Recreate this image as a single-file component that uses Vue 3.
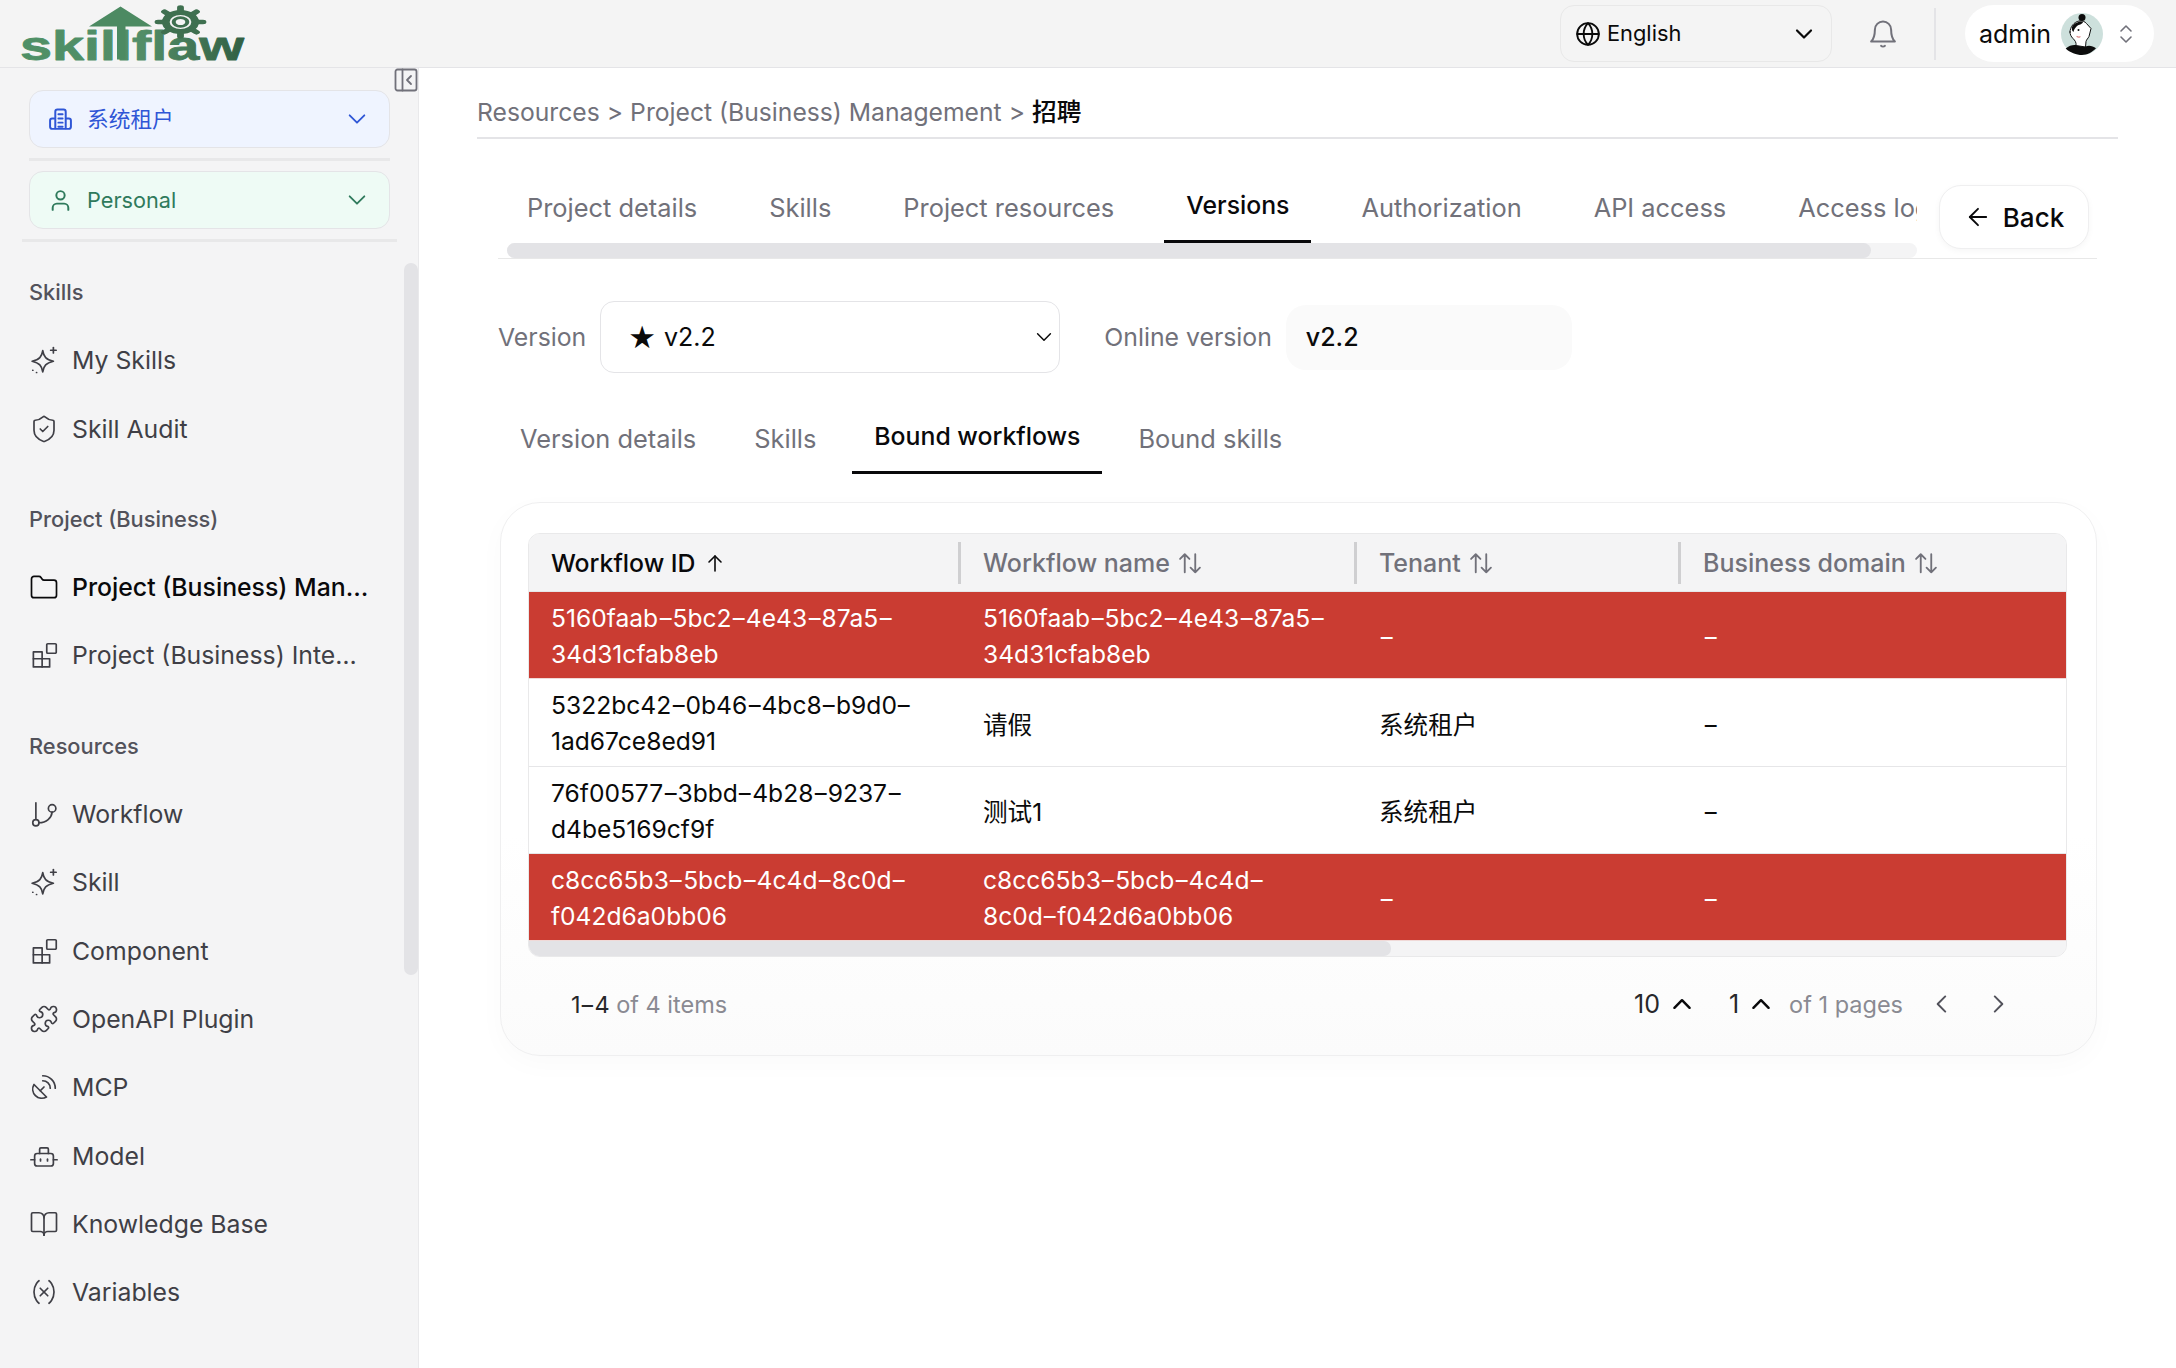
<script setup>
const ICONS = {
  sparkle: ['M11 4.5C11.8 9.6 13.6 11.6 19.5 13 13.6 14.4 11.8 16.4 11 21.5 10.2 16.4 8.4 14.4 2.5 13 8.4 11.6 10.2 9.6 11 4.5Z', 'M19.5 2v4.4', 'M17.3 4.2h4.4', 'M3 20.2h.1', 'M6 22h.1'],
  shield: ['M20 13c0 5-3.5 7.5-7.66 8.95a1 1 0 0 1-.67-.01C7.5 20.5 4 18 4 13V6a1 1 0 0 1 1-1c2 0 4.5-1.2 6.24-2.72a1.17 1.17 0 0 1 1.52 0C14.51 3.81 17 5 19 5a1 1 0 0 1 1 1z', 'm9 12 2 2 4-4'],
  folder: ['M20 20.5a2 2 0 0 0 2-2V8.5a2 2 0 0 0-2-2h-7.9a2 2 0 0 1-1.69-.9L9.6 4.4A2 2 0 0 0 7.93 3.5H4a2 2 0 0 0-2 2v13a2 2 0 0 0 2 2Z'],
  blocks: ['M3.5 9.5h7v5.5h6v6.5h-13z', 'M10.5 15v6.5', 'M3.5 15h7', 'M15 3h6a.8.8 0 0 1 .8.8v6a.8.8 0 0 1-.8.8h-6a.8.8 0 0 1-.8-.8v-6a.8.8 0 0 1 .8-.8z'],
  flow: ['M5.5 3v12.5', 'M8 19c6 0 10-4 10.500-8.500', 'M5.500 21.500a2.500 2.500 0 1 0 0-5 2.500 2.500 0 0 0 0 5z', 'M18.500 10.500a3 3 0 1 0 0-6 3 3 0 0 0 0 6z'],
  puzzle: ['M15.39 4.39a1 1 0 0 0 1.68-.474 2.5 2.5 0 1 1 3.014 3.015 1 1 0 0 0-.474 1.68l1.683 1.682a2.414 2.414 0 0 1 0 3.414L19.61 15.39a1 1 0 0 1-1.68-.474 2.5 2.5 0 1 0-3.014 3.015 1 1 0 0 1 .474 1.68l-1.683 1.682a2.414 2.414 0 0 1-3.414 0L8.61 19.61a1 1 0 0 0-1.68.474 2.5 2.5 0 1 1-3.014-3.015 1 1 0 0 0 .474-1.68l-1.683-1.682a2.414 2.414 0 0 1 0-3.414L4.39 8.61a1 1 0 0 1 1.68.474 2.5 2.5 0 1 0 3.014-3.015 1 1 0 0 1-.474-1.68l1.683-1.682a2.414 2.414 0 0 1 3.414 0z'],
  dish: ['M4 10a7.31 7.31 0 0 0 10 10Z', 'm9 15 3-3', 'M17 13a6 6 0 0 0-6-6', 'M21 13A10 10 0 0 0 11 3'],
  bot: ['M6.500 10h11a2 2 0 0 1 2 2v6a2 2 0 0 1-2 2h-11a2 2 0 0 1-2-2v-6a2 2 0 0 1 2-2z', 'M8.500 10V6.500a1 1 0 0 1 1-1h5a1 1 0 0 1 1 1V10', 'M1.500 15h3', 'M19.500 15h3', 'M9.200 14.500v1.500', 'M14.800 14.500v1.500'],
  book: ['M12 7v14', 'M3 18a1 1 0 0 1-1-1V4a1 1 0 0 1 1-1h5a4 4 0 0 1 4 4 4 4 0 0 1 4-4h5a1 1 0 0 1 1 1v13a1 1 0 0 1-1 1h-6a3 3 0 0 0-3 3 3 3 0 0 0-3-3z'],
  variable: ['M8 21s-4-3-4-9 4-9 4-9', 'M16 3s4 3 4 9-4 9-4 9', 'm9 9 6 6', 'm15 9-6 6'],
}

const groups = [
  { label: 'Skills', items: [{ icon: 'sparkle', text: 'My Skills' }, { icon: 'shield', text: 'Skill Audit' }] },
  { label: 'Project (Business)', items: [{ icon: 'folder', text: 'Project (Business) Man…', active: true }, { icon: 'blocks', text: 'Project (Business) Inte…' }] },
  {
    label: 'Resources',
    items: [
      { icon: 'flow', text: 'Workflow' },
      { icon: 'sparkle', text: 'Skill' },
      { icon: 'blocks', text: 'Component' },
      { icon: 'puzzle', text: 'OpenAPI Plugin' },
      { icon: 'dish', text: 'MCP' },
      { icon: 'bot', text: 'Model' },
      { icon: 'book', text: 'Knowledge Base' },
      { icon: 'variable', text: 'Variables' },
    ],
  },
]

const mainTabs = ['Project details', 'Skills', 'Project resources', 'Versions', 'Authorization', 'API access', 'Access logs']
const subTabs = ['Version details', 'Skills', 'Bound workflows', 'Bound skills']
const columns = [
  { text: 'Workflow ID', sorted: true },
  { text: 'Workflow name' },
  { text: 'Tenant' },
  { text: 'Business domain' },
]
const rows = [
  { danger: true, id: ['5160faab-5bc2-4e43-87a5-', '34d31cfab8eb'], name: ['5160faab-5bc2-4e43-87a5-', '34d31cfab8eb'], tenant: '-', domain: '-' },
  { id: ['5322bc42-0b46-4bc8-b9d0-', '1ad67ce8ed91'], name: ['请假'], tenant: '系统租户', domain: '-' },
  { id: ['76f00577-3bbd-4b28-9237-', 'd4be5169cf9f'], name: ['测试1'], tenant: '系统租户', domain: '-' },
  { danger: true, id: ['c8cc65b3-5bcb-4c4d-8c0d-', 'f042d6a0bb06'], name: ['c8cc65b3-5bcb-4c4d-', '8c0d-f042d6a0bb06'], tenant: '-', domain: '-' },
]

// The reference font draws a long hyphen: split so each one can be styled.
const pieces = (line) => line.split(/(-)/).filter(Boolean)
</script>

<template>
  <div class="page">
    <header class="topbar">
      <svg class="logo" width="232" height="62" viewBox="0 0 232 62">
        <defs>
          <linearGradient id="logoFill" x1="0" y1="0" x2="1" y2="0">
            <stop offset="0" stop-color="#4f9066" />
            <stop offset="0.55" stop-color="#528d67" />
            <stop offset="1" stop-color="#315f43" />
          </linearGradient>
        </defs>
        <text class="logo-word" x="2" y="57.500" textLength="224" lengthAdjust="spacingAndGlyphs" fill="url(#logoFill)" stroke="url(#logoFill)" stroke-width="0.8">skillflaw</text>
        <path d="M102.500 4.500 71 24.500h28v33h8.500v-33H134z" fill="#4c8a62" />
        <g transform="translate(162.500 20) scale(1.55 1)" fill="none" stroke="#3f7050">
          <circle r="9.500" stroke-width="5" />
          <circle r="4.400" stroke-width="2.600" />
          <path stroke-width="4.400" d="M0-14.500v3M0 11.500v3M-14.500 0h3M11.500 0h3M-10.300-10.300l2.200 2.200M8.100 8.100l2.200 2.200M10.300-10.300l-2.200 2.200M-8.100 8.100l-2.200 2.200" />
        </g>
      </svg>

      <div class="top-right">
        <div class="lang-select">
          <svg class="globe" viewBox="0 0 24 24" width="26" height="26"><circle cx="12" cy="12" r="10" /><path d="M12 2a14.500 14.500 0 0 0 0 20 14.500 14.500 0 0 0 0-20" /><path d="M2 12h20" /></svg>
          <span class="lang-text">English</span>
          <svg class="lang-chev" viewBox="0 0 24 24" width="24" height="24"><path d="m5 8.500 7 7 7-7" /></svg>
        </div>
        <svg class="bell" viewBox="0 0 24 24" width="30" height="30"><path d="M12 2a6.500 6.500 0 0 0-6.500 6.500c0 5.500-1.500 8-3 9.500h19c-1.500-1.500-3-4-3-9.500A6.500 6.500 0 0 0 12 2z" /><path d="M10.500 21.500c.7.8 2.300.8 3 0" /></svg>
        <span class="top-divider"></span>
        <div class="user-pill">
          <span class="user-name">admin</span>
          <svg class="avatar" viewBox="0 0 44 44" width="44" height="44">
            <circle cx="22" cy="22" r="21" fill="#cde0dc" />
            <path d="M5.700 36.500C9 33.500 13 32.500 16 33l9.500 1.500c3.500-1.500 7.500-.5 10.500 1.800C32 40.500 27 43 22 43S9.500 40.500 5.700 36.500z" fill="#0c0c0c" />
            <path d="M10 20c0-5 4-10 9-11 3-.5 6 .5 7.500 2.500l4.500 5-2 8c-1 2-2.500 3-3 5l-.500 5.500-9.500-1.500c.5-3-1-5-3-7-2-2-3-4-3-6.500z" fill="#fff" stroke="#111" stroke-width="1" />
            <circle cx="22" cy="5.500" r="3.500" fill="#0c0c0c" />
            <path d="M12 15c2-4 8-6.500 11-5-1 3-4 2-6 4-1.500 1.500-3 3-3.500 6-1.500-1-2-3-1.500-5z" fill="#0c0c0c" />
            <circle cx="18.500" cy="18" r="1" fill="#111" />
            <path d="M17 24.500c1 .8 2 .8 3 .2" fill="none" stroke="#d88" stroke-width="1.200" />
          </svg>
          <svg class="updown" viewBox="0 0 16 24" width="16" height="24"><path d="m3 9 5-5 5 5M3 15l5 5 5-5" /></svg>
        </div>
      </div>
    </header>

    <div class="body">
      <aside class="sidebar">
        <div class="picker picker-blue">
          <svg viewBox="0 0 24 24" width="25" height="25" class="picker-icon"><path d="M7 20.500V4.500a2 2 0 0 1 2-2h6a2 2 0 0 1 2 2v16" /><path d="M6 11H4a2 2 0 0 0-2 2v6a2 2 0 0 0 2 2h16a2 2 0 0 0 2-2v-6a2 2 0 0 0-2-2h-2" /><path d="M10 7h4M10 11h4M10 15h4M10 19h4" /></svg>
          <span class="picker-text">系统租户</span>
          <svg viewBox="0 0 24 24" width="22" height="22" class="picker-chev"><path d="m4 8 8 8 8-8" /></svg>
        </div>
        <div class="rule rule-short"></div>
        <div class="picker picker-green">
          <svg viewBox="0 0 24 24" width="25" height="25" class="picker-icon"><path d="M19.500 21v-2a4 4 0 0 0-4-4h-7a4 4 0 0 0-4 4v2" /><circle cx="12" cy="7" r="4" /></svg>
          <span class="picker-text picker-latin">Personal</span>
          <svg viewBox="0 0 24 24" width="22" height="22" class="picker-chev"><path d="m4 8 8 8 8-8" /></svg>
        </div>
        <div class="rule rule-long"></div>

        <nav class="nav">
          <section v-for="group in groups" :key="group.label" class="nav-group">
            <div class="nav-label">{{ group.label }}</div>
            <a v-for="item in group.items" :key="item.text" class="nav-item" :class="{ active: item.active }">
              <svg viewBox="0 0 24 24" width="30" height="30" class="nav-icon">
                <path v-for="d in ICONS[item.icon]" :key="d" :d="d" />
              </svg>
              <span class="nav-text">{{ item.text }}</span>
            </a>
          </section>
        </nav>
        <div class="side-scroll"></div>
      </aside>

      <button class="collapse" type="button" aria-label="Collapse sidebar">
        <svg viewBox="0 0 24 24" width="24" height="24"><rect x="1.500" y="1.500" width="21" height="21" rx="2" /><path d="M8.500 1.500v21" /><path d="m17 8-4 4 4 4" /></svg>
      </button>

      <main class="main">
        <div class="crumbs">
          <span>Resources</span><span class="sep">&gt;</span><span>Project (Business) Management</span><span class="sep">&gt;</span><span class="crumb-now">招聘</span>
        </div>

        <div class="detail">
          <div class="tabbar">
            <div class="tab-col">
              <div class="tabs">
                <div v-for="tab in mainTabs" :key="tab" class="tab" :class="{ current: tab === 'Versions' }">{{ tab }}</div>
              </div>
              <div class="tab-track"><div class="tab-thumb"></div></div>
            </div>
            <button class="back" type="button">
              <svg viewBox="0 0 24 24" width="28" height="28"><path d="m12 19-7-7 7-7" /><path d="M19 12H5" /></svg>
              <span>Back</span>
            </button>
          </div>

          <div class="version-row">
            <span class="field-label">Version</span>
            <div class="version-select">
              <span class="star">★</span>
              <span class="version-value">v2.2</span>
              <svg viewBox="0 0 24 24" width="22" height="22" class="select-chev"><path d="m5 8.500 7 7 7-7" /></svg>
            </div>
            <span class="field-label online-label">Online version</span>
            <div class="online-box">v2.2</div>
          </div>

          <div class="subtabs">
            <div v-for="tab in subTabs" :key="tab" class="tab" :class="{ current: tab === 'Bound workflows' }">{{ tab }}</div>
          </div>

          <div class="card">
            <div class="table">
              <div class="tr head">
                <div v-for="col in columns" :key="col.text" class="th" :class="{ sorted: col.sorted }">
                  <span>{{ col.text }}</span>
                  <svg v-if="col.sorted" viewBox="0 0 24 24" width="24" height="24" class="sort-icon"><path d="M12 20V5" /><path d="m6 11 6-6 6 6" /></svg>
                  <svg v-else viewBox="0 0 24 24" width="28" height="28" class="sort-icon"><path d="M7.500 20V4.500M3.500 8.500l4-4 4 4" /><path d="M16.500 4.500V20M12.500 16l4 4 4-4" /></svg>
                </div>
              </div>
              <div v-for="row in rows" :key="row.id[0]" class="tr" :class="{ danger: row.danger }">
                <div class="td">
                  <span v-for="line in row.id" :key="line" class="line"><template v-for="(p, i) in pieces(line)" :key="i"><span v-if="p === '-'" class="dash">-</span><template v-else>{{ p }}</template></template></span>
                </div>
                <div class="td" :class="{ single: row.name.length === 1 }">
                  <span v-for="line in row.name" :key="line" class="line"><template v-for="(p, i) in pieces(line)" :key="i"><span v-if="p === '-'" class="dash">-</span><template v-else>{{ p }}</template></template></span>
                </div>
                <div class="td single"><span v-if="row.tenant === '-'" class="dash">-</span><template v-else>{{ row.tenant }}</template></div>
                <div class="td single"><span class="dash">{{ row.domain }}</span></div>
              </div>
              <div class="table-track"><div class="table-thumb"></div></div>
            </div>

            <div class="pager">
              <div class="pager-total"><span class="strong">1<span class="dash">-</span>4</span> of 4 items</div>
              <div class="pager-right">
                <span class="strong page-size">10</span>
                <svg viewBox="0 0 24 24" width="26" height="26" class="up"><path d="m5 15.500 7-7 7 7" /></svg>
                <span class="strong page-no">1</span>
                <svg viewBox="0 0 24 24" width="26" height="26" class="up"><path d="m5 15.500 7-7 7 7" /></svg>
                <span class="page-of">of 1 pages</span>
                <svg viewBox="0 0 24 24" width="26" height="26" class="arrow prev"><path d="m15 5-7 7 7 7" /></svg>
                <svg viewBox="0 0 24 24" width="26" height="26" class="arrow next"><path d="m9 5 7 7-7 7" /></svg>
              </div>
            </div>
          </div>
        </div>
      </main>
    </div>
  </div>
</template>

<style scoped>
svg { display: block; flex: none; fill: none; stroke: currentColor; stroke-width: 1.6; stroke-linecap: round; stroke-linejoin: round; }
.page {
  width: 2176px;
  height: 1368px;
  overflow: hidden;
  display: flex;
  flex-direction: column;
  background: #fff;
  color: #0a0a0a;
  font-family: Inter, "Noto Sans CJK SC", sans-serif;
  font-size: 25px;
}
.topbar {
  height: 68px;
  flex: none;
  box-sizing: border-box;
  display: flex;
  align-items: center;
  justify-content: space-between;
  background: #f4f4f4;
  border-bottom: 1px solid #e4e4e7;
  padding: 0 22px 0 18px;
}
.logo { stroke: none; margin-top: -1px; }
.logo-word { font-family: "Liberation Sans", sans-serif; font-weight: 700; font-size: 40px; }
.top-right { display: flex; align-items: center; }
.lang-select {
  width: 272px;
  height: 57px;
  box-sizing: border-box;
  display: flex;
  align-items: center;
  padding: 0 15px 0 14px;
  border: 1px solid #e8e8e8;
  border-radius: 14px;
}
.globe { stroke-width: 1.7; }
.lang-text { margin-left: 6px; padding-bottom: 2px; font-size: 21.800px; }
.lang-chev { margin-left: auto; stroke-width: 2.200; }
.bell { margin-left: 36px; color: #71717a; }
.top-divider { width: 2px; height: 52px; background: #e4e4e7; margin-left: 36px; }
.user-pill {
  width: 189px;
  height: 57px;
  margin-left: 29px;
  box-sizing: border-box;
  display: flex;
  align-items: center;
  padding-left: 14px;
  background: #fff;
  border-radius: 29px;
}
.user-name { font-size: 25px; }
.avatar { margin-left: 9px; stroke: none; }
.updown { margin-left: 14px; color: #71717a; }

.body { flex: 1; display: flex; position: relative; min-height: 0; }
.sidebar {
  width: 419px;
  flex: none;
  box-sizing: border-box;
  position: relative;
  overflow: hidden;
  background: #f4f4f5;
  border-right: 1px solid #e9e9eb;
  padding: 22px 0 0 29px;
}
.picker {
  width: 361px;
  height: 58px;
  box-sizing: border-box;
  display: flex;
  align-items: center;
  padding: 0 21px 0 18px;
  border: 1px solid #e4e4e7;
  border-radius: 14px;
  font-size: 21.700px;
}
.picker-blue { background: #eff4ff; color: #2f56d6; }
.picker-green { background: #eefbf5; color: #2f7a5c; }
.picker-icon { stroke-width: 1.900; }
.picker-text { margin-left: 14px; padding-bottom: 3px; }
.picker-latin { padding-bottom: 1px; }
.picker-chev { margin-left: auto; stroke-width: 2; }
.rule { height: 3px; background: #e8e8e9; }
.rule-short { width: 361px; margin: 10px 0; }
.rule-long { width: 375px; margin: 10px 0 30px -7px; }
.nav-group { margin-bottom: 36px; }
.nav-label { height: 40px; line-height: 40px; margin-bottom: 14px; font-size: 21.800px; font-weight: 500; color: #52525b; }
.nav-item {
  height: 68.400px;
  display: flex;
  align-items: center;
  color: #3f3f46;
  font-size: 24.800px;
}
.nav-item.active { color: #09090b; font-weight: 500; }
.nav-icon { margin-left: -0.500px; stroke-width: 1.350; }
.nav-text { margin-left: 13.500px; white-space: nowrap; }
.side-scroll {
  position: absolute;
  left: 404px;
  top: 195px;
  width: 14px;
  height: 712px;
  border-radius: 7px;
  background: #e3e3e6;
}
.collapse {
  position: absolute;
  left: 394px;
  top: 0;
  width: 24px;
  height: 24px;
  padding: 0;
  border: 0;
  background: transparent;
  color: #71717a;
}
.collapse svg { stroke-width: 1.800; }

.main { flex: 1; min-width: 0; box-sizing: border-box; padding: 25px 58px 0 58px; }
.crumbs {
  height: 38px;
  line-height: 38px;
  padding-bottom: 6px;
  border-bottom: 2px solid #e4e4e7;
  color: #71717a;
  font-size: 24.700px;
  display: flex;
}
.sep { margin: 0 7px; }
.crumb-now { color: #09090b; font-weight: 500; }
.detail { padding: 32px 21px 0; }
.tabbar { display: flex; height: 87px; border-bottom: 1px solid #e8e8e8; box-sizing: content-box; }
.tab-col { width: 1412px; margin-left: 7px; overflow: hidden; flex: none; }
.tabs { display: flex; gap: 28px; white-space: nowrap; }
.tab {
  flex: none;
  box-sizing: border-box;
  height: 72px;
  padding: 0 22px;
  display: flex;
  align-items: center;
  color: #71717a;
  font-size: 25.400px;
}
.tab.current {
  color: #09090b;
  font-weight: 500;
  font-size: 24.800px;
  padding-bottom: 2px;
  border-bottom: 3px solid #09090b;
}
.tab-track { margin-left: 2px; height: 15px; border-radius: 8px; background: #f4f4f5; }
.tab-thumb { width: 1364px; height: 15px; border-radius: 8px; background: #e3e3e6; }
.back {
  width: 150px;
  height: 64px;
  margin: 14px 0 0 22px;
  display: flex;
  align-items: center;
  justify-content: center;
  gap: 11px;
  border: 1px solid #efeff0;
  border-radius: 22px;
  background: #fff;
  color: #09090b;
  box-shadow: 0 2px 6px rgba(0, 0, 0, .04);
  font: 500 26px Inter, sans-serif;
}
.back svg { stroke-width: 1.600; }
.version-row { display: flex; align-items: center; margin-top: 42px; height: 72px; }
.field-label { color: #71717a; font-size: 24.800px; }
.version-select {
  width: 460px;
  height: 72px;
  margin-left: 14px;
  box-sizing: border-box;
  display: flex;
  align-items: center;
  padding: 0 4px 0 27px;
  border: 1px solid #e4e4e7;
  border-radius: 14px;
}
.star { font-family: "DejaVu Sans", sans-serif; font-size: 31px; line-height: 1; }
.version-value { margin-left: 8px; font-size: 25px; }
.select-chev { margin-left: auto; }
.online-label { margin-left: 44px; }
.online-box {
  width: 286px;
  height: 65px;
  margin-left: 14px;
  box-sizing: border-box;
  padding-left: 20px;
  display: flex;
  align-items: center;
  background: #fafafa;
  border-radius: 20px;
  font-size: 25px;
  font-weight: 500;
}
.subtabs { display: flex; gap: 14px; margin-top: 29px; }
.card {
  margin: 28px 0 0 2px;
  box-sizing: border-box;
  height: 554px;
  padding: 30px 29px 0 27px;
  border: 1px solid #efeff0;
  border-radius: 40px;
  background: linear-gradient(#fff 60%, #fbfbfb);
  box-shadow: 0 8px 28px rgba(0, 0, 0, .025);
}
.table {
  border: 1px solid #e9e9ea;
  border-radius: 12px;
  overflow: hidden;
}
.tr {
  display: grid;
  grid-template-columns: 432px 396px 324px 1fr;
  border-bottom: 1px solid #e6e6e8;
  background: #fff;
  height: 87px;
  box-sizing: border-box;
  align-items: center;
}
.tr:nth-child(3) { height: 88px; }
.tr.head { height: 58px; background: #f4f4f5; }
.tr.danger { background: #ca3c32; color: #fff; border-bottom-color: #f0d9d7; }
.th {
  height: 42px;
  box-sizing: border-box;
  display: flex;
  align-items: center;
  gap: 6px;
  padding-left: 22px;
  color: #71717a;
  border-right: 3px solid #cfcfd1;
  font-size: 25px;
  font-weight: 500;
}
.th:last-child { border-right: 0; }
.th.sorted { color: #09090b; font-size: 24.800px; gap: 8px; }
.td { padding: 1px 0 0 22px; line-height: 36px; font-size: 24.600px; }
.td.single { padding-top: 4px; }
.line { display: block; white-space: nowrap; }
.dash { display: inline-block; margin: 0 1.500px; transform: scaleX(1.500); }
.table-track { height: 15px; background: #f4f4f5; }
.table-thumb { width: 862px; height: 15px; background: #e3e3e6; border-radius: 0 7px 7px 7px; }
.pager { height: 94px; display: flex; align-items: center; justify-content: space-between; padding: 0 56px 0 43px; }
.pager-total { color: #8a8a92; font-size: 23.500px; }
.strong { color: #27272a; }
.pager-right { display: flex; align-items: center; font-size: 25px; }
.up { stroke-width: 2.300; margin-left: 9px; color: #09090b; }
.page-no { margin-left: 34px; }
.page-of { margin-left: 15px; color: #8a8a92; font-size: 23.500px; }
.arrow { color: #52525b; stroke-width: 1.800; }
.prev { margin-left: 26px; }
.next { margin-left: 30px; }
</style>

<style>
html, body { margin: 0; padding: 0; background: #fff; }
</style>
